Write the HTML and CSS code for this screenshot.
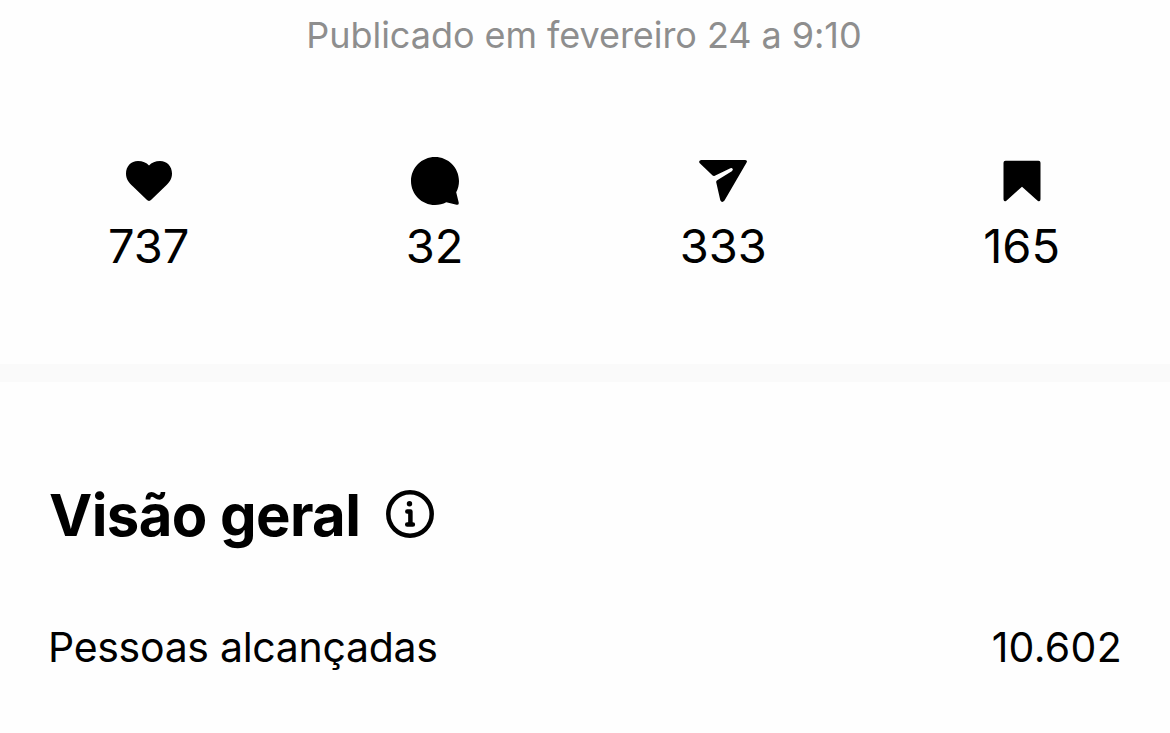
FILE: index.html
```html
<!DOCTYPE html>
<html lang="pt-BR">
<head>
    <meta charset="UTF-8">
    <meta name="viewport" content="width=device-width, initial-scale=1.0">
    <title>Visão geral</title>
    <link rel="stylesheet" href="styles.css">
</head>
<body>

    <header class="post">
        <p class="published">Publicado em fevereiro 24 a 9:10</p>

        <div class="stats">
            <div class="stat">
                <svg class="icon" viewBox="0 0 48 48"><path d="M13 4C6 4 1 9.400 1 16.500C1 22 3.500 25.500 8 29.500L21.500 42.500Q24 45.300 26.500 42.500L40 29.500C44.500 25.500 47 22 47 16.500C47 9.400 42 4 35 4C30.500 4 26.500 5.500 24 8.500C21.500 5.500 17.500 4 13 4Z"/></svg>
                <span class="likes">737</span>
            </div>
            <div class="stat">
                <svg class="icon" viewBox="0 0 48 48"><path d="M24 0C10.700 0 0 10.700 0 24S10.700 48 24 48C28 48 32 47 35.300 45.200L45.600 47.700Q48.200 48 47.700 45.500L45.200 35.300C47 32 48 28 48 24C48 10.700 37.300 0 24 0Z"/></svg>
                <span class="comments">32</span>
            </div>
            <div class="stat">
                <svg class="icon" viewBox="0 0 48 48"><path d="M2 3H46.200Q48.800 3.300 47.600 5.600L25.500 43.500Q23 46.500 21.300 43.300L17.200 25.300Q17 24 18.200 23.300L32.800 14.300Q34.200 13.100 33.700 12Q33 10.700 31.400 11.300L15.800 18.800Q14.600 19.400 13.600 18.600L.8 6.300Q-1 4 2 3Z"/></svg>
                <span class="shares">333</span>
            </div>
            <div class="stat">
                <svg class="icon" viewBox="0 0 48 48"><path d="M7.500 3.700H40.500Q42.500 3.700 42.500 5.700V42.300Q42.300 45.300 39.600 43.800L24 29.700L8.400 43.800Q5.700 45.300 5.500 42.300V5.700Q5.500 3.700 7.500 3.700Z"/></svg>
                <span class="saves">165</span>
            </div>
        </div>
    </header>

    <section class="overview">
        <div class="overview-title">
            <h2>Visão geral</h2>
            <svg class="info" viewBox="0 0 48 48">
                <circle cx="24" cy="24" r="21.700"/>
                <path d="M21.300 21.500H24.400V34.500M21.200 34.600H26.900"/>
                <circle class="dot" cx="23.500" cy="13.800" r="2.700"/>
            </svg>
        </div>

        <div class="row">
            <span class="row-label">Pessoas alcançadas</span>
            <span class="row-value">10.602</span>
        </div>
    </section>

</body>
</html>
```
FILE: styles.css
```css
body {
    font-family: Inter, 'Liberation Sans', sans-serif;
    margin: 0;
    background-color: #fefefe;
    color: #000;
}

.post {
    height: 351px;
    padding-top: 13px;
    border-bottom: 18px solid #fafafa;
}

.published {
    margin: 0 2px 0 0;
    text-align: center;
    font-size: 36px;
    line-height: 44px;
    letter-spacing: -0.05px;
    color: #8e8e8e;
}

.stats {
    display: flex;
    justify-content: space-between;
    margin-top: 100px;
    padding: 0 110px 0 108px;
}

.stat {
    display: flex;
    flex-direction: column;
    align-items: center;
    gap: 13px;
    font-size: 47px;
    line-height: 56px;
}

.icon {
    width: 48px;
    height: 48px;
}

.overview {
    padding: 97px 48px 0;
}

.overview-title {
    display: flex;
    align-items: center;
    gap: 26px;
    padding-left: 1px;
}

h2 {
    margin: 0;
    padding-top: 2px;
    font-size: 58px;
    line-height: 68px;
    font-weight: 700;
    letter-spacing: -0.6px;
}

.info {
    width: 48px;
    height: 48px;
    fill: none;
    stroke: #000;
    stroke-width: 4.5px;
    stroke-linecap: round;
    stroke-linejoin: round;
}

.info .dot {
    fill: #000;
    stroke: none;
}

.row {
    display: flex;
    justify-content: space-between;
    margin-top: 73px;
    font-size: 41px;
    line-height: 50px;
}

.row-label {
    letter-spacing: -0.3px;
}

.row-value {
    letter-spacing: 0.3px;
}
```
